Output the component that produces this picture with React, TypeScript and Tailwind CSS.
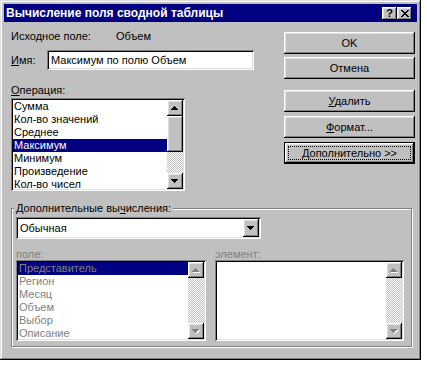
import React from "react";

const raised = "bg-[#c0c0c0] shadow-[inset_-1px_-1px_#000,inset_1px_1px_#fff,inset_-2px_-2px_#808080,inset_2px_2px_#dfdfdf]";
const sunken = "bg-white shadow-[inset_1px_1px_#808080,inset_-1px_-1px_#fff,inset_2px_2px_#000,inset_-2px_-2px_#dfdfdf]";
const checker = "bg-[image:repeating-conic-gradient(#c0c0c0_0%_25%,#fff_0%_50%)] bg-size-[2px_2px]";

const Arrow = ({ down, disabled }: { down?: boolean; disabled?: boolean }) => {
  const rows = [0, 1, 2, 3];
  const draw = (color: string, off: number) =>
    rows.map((i) => (
      <rect
        key={color + i}
        x={3 - i + off}
        y={(down ? 3 - i : i) + off}
        width={2 * i + 1}
        height={1}
        fill={color}
      />
    ));
  return (
    <svg width="8" height="5" shapeRendering="crispEdges">
      {disabled ? draw("#fff", 1) : null}
      {draw(disabled ? "#808080" : "#000", 0)}
    </svg>
  );
};

const ScrollBtn = ({ down, disabled }: { down?: boolean; disabled?: boolean }) => (
  <div className={`${raised} w-[16px] h-[16px] flex items-center justify-center shrink-0`}>
    <Arrow down={down} disabled={disabled} />
  </div>
);

const Item = ({ text, selected, disabled }: { text: string; selected?: boolean; disabled?: boolean }) => (
  <div
    className={`h-[13px] leading-[13px] pl-[1px] whitespace-nowrap ${
      selected ? "bg-[#000080]" : ""
    } ${disabled ? "text-[#808080]" : selected ? "text-white" : "text-black"}`}
  >
    {text}
  </div>
);

const Dialog = () => {
  const ops = ["Сумма", "Кол-во значений", "Среднее", "Максимум", "Минимум", "Произведение", "Кол-во чисел"];
  const fields = ["Представитель", "Регион", "Месяц", "Объем", "Выбор", "Описание"];

  return (
    <div className="w-[421px] h-[360px] bg-[#c0c0c0] p-[4px] flex flex-col shadow-[inset_-1px_-1px_#000,inset_1px_1px_#dfdfdf,inset_-2px_-2px_#808080,inset_2px_2px_#fff]">
      {/* title bar */}
      <div className="h-[18px] bg-[#000080] flex items-center pl-[2px] pr-[5px] shrink-0">
        <span className="flex-1 text-white font-bold text-[12px] leading-[18px] whitespace-nowrap">
          Вычисление поля сводной таблицы
        </span>
        <div className={`${raised} w-[15px] h-[13px] flex items-center justify-center text-[11px] font-bold leading-none text-black`}>
          ?
        </div>
        <div className={`${raised} w-[15px] h-[13px] flex items-center justify-center`}>
          <svg width="8" height="7" shapeRendering="crispEdges">
            <path d="M0 0h2v1h-2zM6 0h2v1h-2zM1 1h2v1h-2zM5 1h2v1h-2zM2 2h4v1h-4zM3 3h2v1h-2zM2 4h4v1h-4zM1 5h2v1h-2zM5 5h2v1h-2zM0 6h2v1h-2zM6 6h2v1h-2z" fill="#000" />
          </svg>
        </div>
      </div>

      <div className="flex flex-col pl-[7px]">
        <div className="flex">
          {/* left column */}
          <div className="w-[243px] flex flex-col">
            <div className="mt-[8px] h-[13px] leading-[13px] flex">
              <span className="w-[105px]">Исходное поле:</span>
              <span>Объем</span>
            </div>
            <div className="mt-[7px] h-[20px] flex items-center">
              <span className="w-[36px]">
                <u>И</u>мя:
              </span>
              <div className={`${sunken} w-[207px] h-[20px] pl-[4px] leading-[20px]`}>Максимум по полю Объем</div>
            </div>
            <div className="mt-[14px] h-[13px] leading-[13px]">
              <u>О</u>перация:
            </div>
            <div className={`${sunken} mt-[1px] w-[174px] h-[93px] p-[2px] flex`}>
              <div className="flex-1 flex flex-col">
                {ops.map((o) => (
                  <Item key={o} text={o} selected={o === "Максимум"} />
                ))}
              </div>
              <div className="w-[16px] flex flex-col">
                <ScrollBtn />
                <div className={`${raised} h-[36px]`} />
                <div className={`${checker} flex-1`} />
                <ScrollBtn down />
              </div>
            </div>
          </div>

          {/* right column */}
          <div className="ml-[30px] w-[131px] flex flex-col">
            <div className={`${raised} mt-[10px] h-[22px] flex items-center justify-center`}>OK</div>
            <div className={`${raised} mt-[3px] h-[22px] flex items-center justify-center`}>Отмена</div>
            <div className={`${raised} mt-[11px] h-[22px] flex items-center justify-center`}>
              <span>
                <u>У</u>далить
              </span>
            </div>
            <div className={`${raised} mt-[4px] h-[22px] flex items-center justify-center`}>
              <span>
                <u>Ф</u>ормат...
              </span>
            </div>
            <div className="mt-[4px] h-[22px] border border-black">
              <div className={`${raised} h-full p-[3px]`}>
                <div className="h-full border border-dotted border-black flex items-center justify-center">
                  <span>
                    <u>Д</u>ополнительно &gt;&gt;
                  </span>
                </div>
              </div>
            </div>
          </div>
        </div>

        {/* group box */}
        <fieldset className="mt-[11px] w-[401px] border border-[#808080] shadow-[inset_1px_1px_#fff,1px_1px_#fff] pb-[5px]">
          <legend className="ml-[2px] px-[2px] h-[13px] leading-[13px] bg-[#c0c0c0]">
            Дополнительные вы<u>ч</u>исления:
          </legend>
          <div className={`${sunken} mt-[2px] ml-[4px] w-[245px] h-[22px] p-[2px] flex`}>
            <div className="flex-1 pl-[2px] leading-[18px]">Обычная</div>
            <div className={`${raised} w-[16px] h-[18px] flex items-center justify-center`}>
              <Arrow down />
            </div>
          </div>
          <div className="mt-[10px] ml-[4px] h-[11px] leading-[11px] flex text-[#808080]">
            <span className="w-[199px]">поле:</span>
            <span>элемент:</span>
          </div>
          <div className="ml-[4px] flex gap-[9px]">
            <div className={`${sunken} w-[190px] h-[81px] p-[2px] flex`}>
              <div className="flex-1 flex flex-col overflow-hidden">
                {fields.map((f) => (
                  <Item key={f} text={f} selected={f === "Представитель"} disabled />
                ))}
              </div>
              <div className="w-[16px] flex flex-col">
                <ScrollBtn disabled />
                <div className={`${checker} flex-1`} />
                <ScrollBtn down disabled />
              </div>
            </div>
            <div className={`${sunken} w-[189px] h-[81px] p-[2px] flex`}>
              <div className="flex-1" />
              <div className="w-[16px] flex flex-col">
                <ScrollBtn disabled />
                <div className={`${checker} flex-1`} />
                <ScrollBtn down disabled />
              </div>
            </div>
          </div>
        </fieldset>
      </div>
    </div>
  );
};

export default function App() {
  return (
    <div className="w-[427px] h-[365px] bg-white text-[11px] text-black font-['Liberation_Sans',Arial,sans-serif] overflow-hidden">
      <Dialog />
    </div>
  );
}
